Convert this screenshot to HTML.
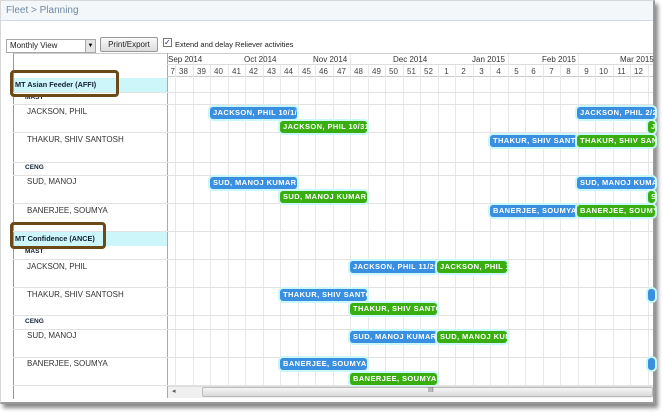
<!DOCTYPE html>
<html><head><style>
*{margin:0;padding:0;box-sizing:border-box}
body{width:663px;height:415px;background:#fff;position:relative;overflow:hidden;font-family:"Liberation Sans","DejaVu Sans",sans-serif;}
.a{position:absolute}
.t{font-size:8px;color:#333;white-space:nowrap}
.g{font-size:7.3px;font-weight:bold;color:#123}
.b{position:absolute;height:12px;border-radius:3px;color:#fff;font-size:7.5px;font-weight:bold;line-height:12px;padding-left:3px;overflow:hidden;white-space:nowrap;letter-spacing:.4px;font-family:"Liberation Sans",sans-serif}
.bl{background:#3a8fe0;box-shadow:0 0 0 2px #c8f8fa}
.gr{background:#3aae10;box-shadow:0 0 0 2px #c8f8fa}
.hl{position:absolute;left:13px;width:640px;height:1px;background:#e2e2e2}
</style></head><body>
<div class="a" style="left:0;top:0;width:655px;height:404px;border:1px solid #d8d8d8;border-right:2px solid #999;border-bottom:2px solid #999;box-shadow:3px 4px 4px #888"></div>
<div class="a" style="left:1px;top:1px;width:652px;height:20px;background:#f4f7fa;border-bottom:1px solid #d5dbe3"></div>
<div class="a" style="left:6px;top:5px;font-size:10px;color:#6f8aa3">Fleet &gt; Planning</div>
<div class="a" style="left:6px;top:39px;width:90px;height:14px;border:1px solid #a8a8a8;background:#fff;font-size:8px;line-height:12px;padding-left:3px;color:#222">Monthly View</div>
<div class="a" style="left:85px;top:40px;width:10px;height:12px;background:#e4e4e4;border-left:1px solid #aaa;font-size:6px;text-align:center;line-height:12px">▼</div>
<div class="a" style="left:100px;top:37px;width:58px;height:15px;border:1px solid #999;border-radius:2px;background:linear-gradient(#fafafa,#dcdcdc);font-size:8px;text-align:center;line-height:14px;color:#222">Print/Export</div>
<div class="a" style="left:163px;top:38px;width:9px;height:9px;border:1px solid #777;background:#fff;font-size:8px;line-height:8px;color:#235">✓</div>
<div class="a t" style="left:175px;top:40px;color:#222;font-size:7.5px">Extend and delay Reliever activities</div>
<div class="a" style="left:13px;top:53px;width:640px;height:346px;border-left:1px solid #999;border-top:1px solid #ccc"></div>
<div class="a" style="left:167px;top:53px;width:1px;height:345px;background:#aaa"></div>
<div class="a" style="left:167px;top:64px;width:486px;height:1px;background:#ddd"></div>
<div class="a" style="left:167px;top:76px;width:486px;height:1px;background:#ccc"></div>
<div id="cols"></div>
<div class="a t" style="left:168px;top:55px">Sep 2014</div>
<div class="a t" style="left:244px;top:55px">Oct 2014</div>
<div class="a t" style="left:313px;top:55px">Nov 2014</div>
<div class="a t" style="left:393px;top:55px">Dec 2014</div>
<div class="a t" style="left:472px;top:55px">Jan 2015</div>
<div class="a t" style="left:542px;top:55px">Feb 2015</div>
<div class="a t" style="left:620px;top:55px">Mar 2015</div>
<div class="a" style="left:14px;top:78px;width:153px;height:14px;background:#cdf6fa"></div>
<div class="a" style="left:14px;top:232px;width:153px;height:14px;background:#cdf6fa"></div>
<div class="hl" style="top:92px"></div><div class="hl" style="top:104px"></div><div class="hl" style="top:132px"></div>
<div class="hl" style="top:162px"></div><div class="hl" style="top:175px"></div><div class="hl" style="top:203px"></div>
<div class="hl" style="top:231px"></div><div class="hl" style="top:259px"></div><div class="hl" style="top:287px"></div>
<div class="hl" style="top:315px"></div><div class="hl" style="top:329px"></div><div class="hl" style="top:357px"></div>
<div class="hl" style="top:385px"></div>
<div class="a t g" style="left:15px;top:80px">MT Asian Feeder (AFFI)</div>
<div class="a t g" style="left:25px;top:94px;font-size:6.5px">MAST</div>
<div class="a t" style="left:27px;top:107px">JACKSON, PHIL</div>
<div class="a t" style="left:27px;top:135px">THAKUR, SHIV SANTOSH</div>
<div class="a t g" style="left:25px;top:164px;font-size:6.5px">CENG</div>
<div class="a t" style="left:27px;top:177px">SUD, MANOJ</div>
<div class="a t" style="left:27px;top:206px">BANERJEE, SOUMYA</div>
<div class="a t g" style="left:15px;top:234px">MT Confidence (ANCE)</div>
<div class="a t g" style="left:25px;top:248px;font-size:6.5px">MAST</div>
<div class="a t" style="left:27px;top:262px">JACKSON, PHIL</div>
<div class="a t" style="left:27px;top:290px">THAKUR, SHIV SANTOSH</div>
<div class="a t g" style="left:25px;top:318px;font-size:6.5px">CENG</div>
<div class="a t" style="left:27px;top:331px">SUD, MANOJ</div>
<div class="a t" style="left:27px;top:359px">BANERJEE, SOUMYA</div>
<div class="a" style="left:10px;top:70px;width:109px;height:27px;border:3px solid #6b4a18;border-radius:4px"></div>
<div class="a" style="left:10px;top:222px;width:96px;height:27px;border:3px solid #6b4a18;border-radius:4px"></div>
<div class="b bl" style="left:210px;top:107px;width:87px">JACKSON, PHIL 10/1/2</div>
<div class="b bl" style="left:577px;top:107px;width:78px">JACKSON, PHIL 2/2</div>
<div class="b gr" style="left:280px;top:121px;width:87px">JACKSON, PHIL 10/31</div>
<div class="b gr" style="left:648px;top:121px;width:7px">J</div>
<div class="b bl" style="left:490px;top:135px;width:87px">THAKUR, SHIV SANTO</div>
<div class="b gr" style="left:577px;top:135px;width:78px">THAKUR, SHIV SAN</div>
<div class="b bl" style="left:210px;top:177px;width:87px">SUD, MANOJ KUMAR 1</div>
<div class="b bl" style="left:577px;top:177px;width:78px">SUD, MANOJ KUMA</div>
<div class="b gr" style="left:280px;top:191px;width:87px">SUD, MANOJ KUMAR 1</div>
<div class="b gr" style="left:648px;top:191px;width:7px">S</div>
<div class="b bl" style="left:490px;top:205px;width:87px">BANERJEE, SOUMYA 1</div>
<div class="b gr" style="left:577px;top:205px;width:78px">BANERJEE, SOUMYA</div>
<div class="b bl" style="left:350px;top:261px;width:87px">JACKSON, PHIL 11/29</div>
<div class="b gr" style="left:437px;top:261px;width:70px">JACKSON, PHIL 1</div>
<div class="b bl" style="left:280px;top:289px;width:87px">THAKUR, SHIV SANTO</div>
<div class="b gr" style="left:350px;top:303px;width:87px">THAKUR, SHIV SANTO</div>
<div class="b bl" style="left:350px;top:331px;width:87px">SUD, MANOJ KUMAR 1</div>
<div class="b gr" style="left:437px;top:331px;width:70px">SUD, MANOJ KUM</div>
<div class="b bl" style="left:280px;top:358px;width:87px">BANERJEE, SOUMYA 1</div>
<div class="b gr" style="left:350px;top:373px;width:87px">BANERJEE, SOUMYA 1</div>
<div class="b bl" style="left:648px;top:289px;width:7px"></div>
<div class="b bl" style="left:648px;top:358px;width:7px"></div>
<div class="a" style="left:168px;top:386px;width:485px;height:12px;background:#f0f0f0;border-top:1px solid #ddd"></div>
<div class="a" style="left:172px;top:387px;font-size:7px;color:#555">◂</div>
<div class="a" style="left:202px;top:387px;width:451px;height:10px;border:1px solid #bbb;border-radius:2px;background:linear-gradient(#f6f6f6,#d8d8d8)"></div>
<div class="a" style="left:428px;top:387px;font-size:7px;color:#555">III</div>
<script>
var c=document.getElementById('cols'),h='';
var wk=[37,38,39,40,41,42,43,44,45,46,47,48,49,50,51,52,1,2,3,4,5,6,7,8,9,10,11,12,13];
for(var i=0;i<wk.length;i++){var x=157.5+17.5*i;
var m=(i==2||i==6||i==11||i==15||i==20||i==24);
if(i>0)h+='<div class="a" style="left:'+Math.round(x)+'px;top:'+(m?54:65)+'px;width:1px;height:'+(m?344:333)+'px;background:#e8e8e8"></div>';
if(x+8<653)h+='<div class="a t" style="left:'+Math.round(Math.max(x,165))+'px;top:67px;width:'+(i==0?10:17)+'px;text-align:'+(i==0?'right':'center')+';color:#444;overflow:hidden">'+(i==0?'7':wk[i])+'</div>';}
c.innerHTML=h;
</script>
</body></html>
